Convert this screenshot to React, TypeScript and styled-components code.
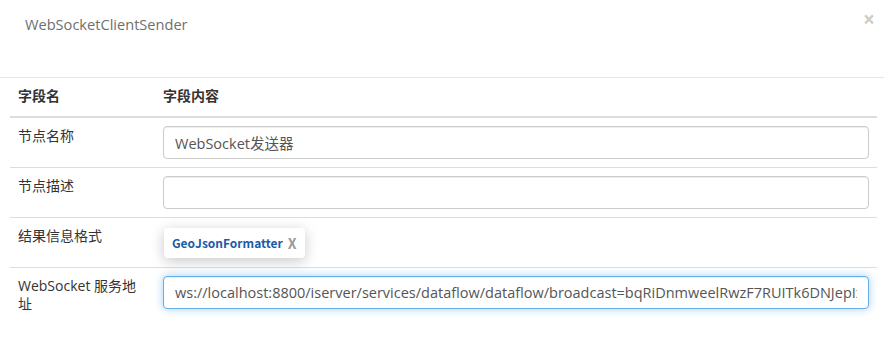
import styled, { createGlobalStyle } from "styled-components";

const fontStack = `"Open Sans", "Noto Sans CJK SC", sans-serif`;

const GlobalStyle = createGlobalStyle`
  body {
    margin: 0;
    background: #fff;
    font-family: ${fontStack};
    color: #333;
  }
`;

const Modal = styled.div`
  width: 884px;
  height: 356px;
  background: #fff;
`;

const Header = styled.div`
  height: 78px;
  box-sizing: border-box;
  padding: 12px 9px 0 25px;
  display: flex;
  justify-content: space-between;
  align-items: flex-start;
  border-bottom: 1px solid #e5e5e5;
`;

const Title = styled.h4`
  margin: 0;
  font-size: 14.6px;
  font-weight: normal;
  line-height: 24px;
  color: #6f6f6f;
`;

const Close = styled.span`
  font-size: 21px;
  font-weight: bold;
  line-height: 12px;
  margin-top: 1px;
  color: #cdcdcd;
  cursor: pointer;
`;

const Body = styled.div`
  padding: 0 7px 0 10px;
`;

const Table = styled.table`
  width: 100%;
  border-collapse: collapse;
  font-size: 14px;
  line-height: 18px;
`;

const HeadCell = styled.th<{ $width?: number }>`
  text-align: left;
  font-weight: bold;
  padding: 9px 8px 11px 8px;
  border-bottom: 2px solid #ddd;
  width: ${(p) => (p.$width ? `${p.$width}px` : "auto")};
  box-sizing: border-box;
`;

const Cell = styled.td`
  padding: 8px;
  border-top: 1px solid #ddd;
  vertical-align: top;
`;

const LabelCell = styled(Cell)`
  color: #333;
  padding: 9px 8px 7px;
`;

const Input = styled.input<{ $focused?: boolean }>`
  display: block;
  width: 100%;
  height: 33px;
  box-sizing: border-box;
  padding: 5px 11px;
  font-family: ${fontStack};
  font-size: 14.5px;
  color: #555;
  background: #fff;
  border: 1px solid ${(p) => (p.$focused ? "#66afe9" : "#ccc")};
  border-radius: 4px;
  outline: none;
  box-shadow: ${(p) =>
    p.$focused
      ? "inset 0 1px 1px rgba(0,0,0,.075), 0 0 8px rgba(102,175,233,.6)"
      : "inset 0 1px 1px rgba(0,0,0,.075)"};
`;

const Tag = styled.div`
  display: inline-flex;
  align-items: center;
  gap: 5px;
  margin: 2px 0 1px 1px;
  height: 30px;
  padding: 0 8px;
  background: #fff;
  border-radius: 4px;
  box-shadow: 0 3px 14px rgba(0, 0, 0, 0.22);
`;

const TagText = styled.span`
  font-family: "Noto Sans CJK SC", sans-serif;
  font-size: 12px;
  font-weight: bold;
  color: #1b5ca8;
`;

const TagRemove = styled.span`
  font-family: "Noto Sans CJK SC", sans-serif;
  font-size: 14px;
  font-weight: bold;
  color: #9a9a9a;
  cursor: pointer;
`;

const rows = [
  { label: "节点名称", value: "WebSocket发送器" },
  { label: "节点描述", value: "" },
];

const App = () => {
  return (
    <>
      <GlobalStyle />
      <Modal>
        <Header>
          <Title>WebSocketClientSender</Title>
          <Close>×</Close>
        </Header>
        <Body>
          <Table>
            <thead>
              <tr>
                <HeadCell $width={145}>字段名</HeadCell>
                <HeadCell>字段内容</HeadCell>
              </tr>
            </thead>
            <tbody>
              {rows.map((r) => (
                <tr key={r.label}>
                  <LabelCell>{r.label}</LabelCell>
                  <Cell>
                    <Input defaultValue={r.value} readOnly />
                  </Cell>
                </tr>
              ))}
              <tr>
                <LabelCell>结果信息格式</LabelCell>
                <Cell>
                  <Tag>
                    <TagText>GeoJsonFormatter</TagText>
                    <TagRemove>X</TagRemove>
                  </Tag>
                </Cell>
              </tr>
              <tr>
                <LabelCell>WebSocket 服务地址</LabelCell>
                <Cell>
                  <Input
                    $focused
                    readOnly
                    defaultValue="ws://localhost:8800/iserver/services/dataflow/dataflow/broadcast=bqRiDnmweelRwzF7RUITk6DNJepIxyz"
                  />
                </Cell>
              </tr>
            </tbody>
          </Table>
        </Body>
      </Modal>
    </>
  );
};

export default App;
